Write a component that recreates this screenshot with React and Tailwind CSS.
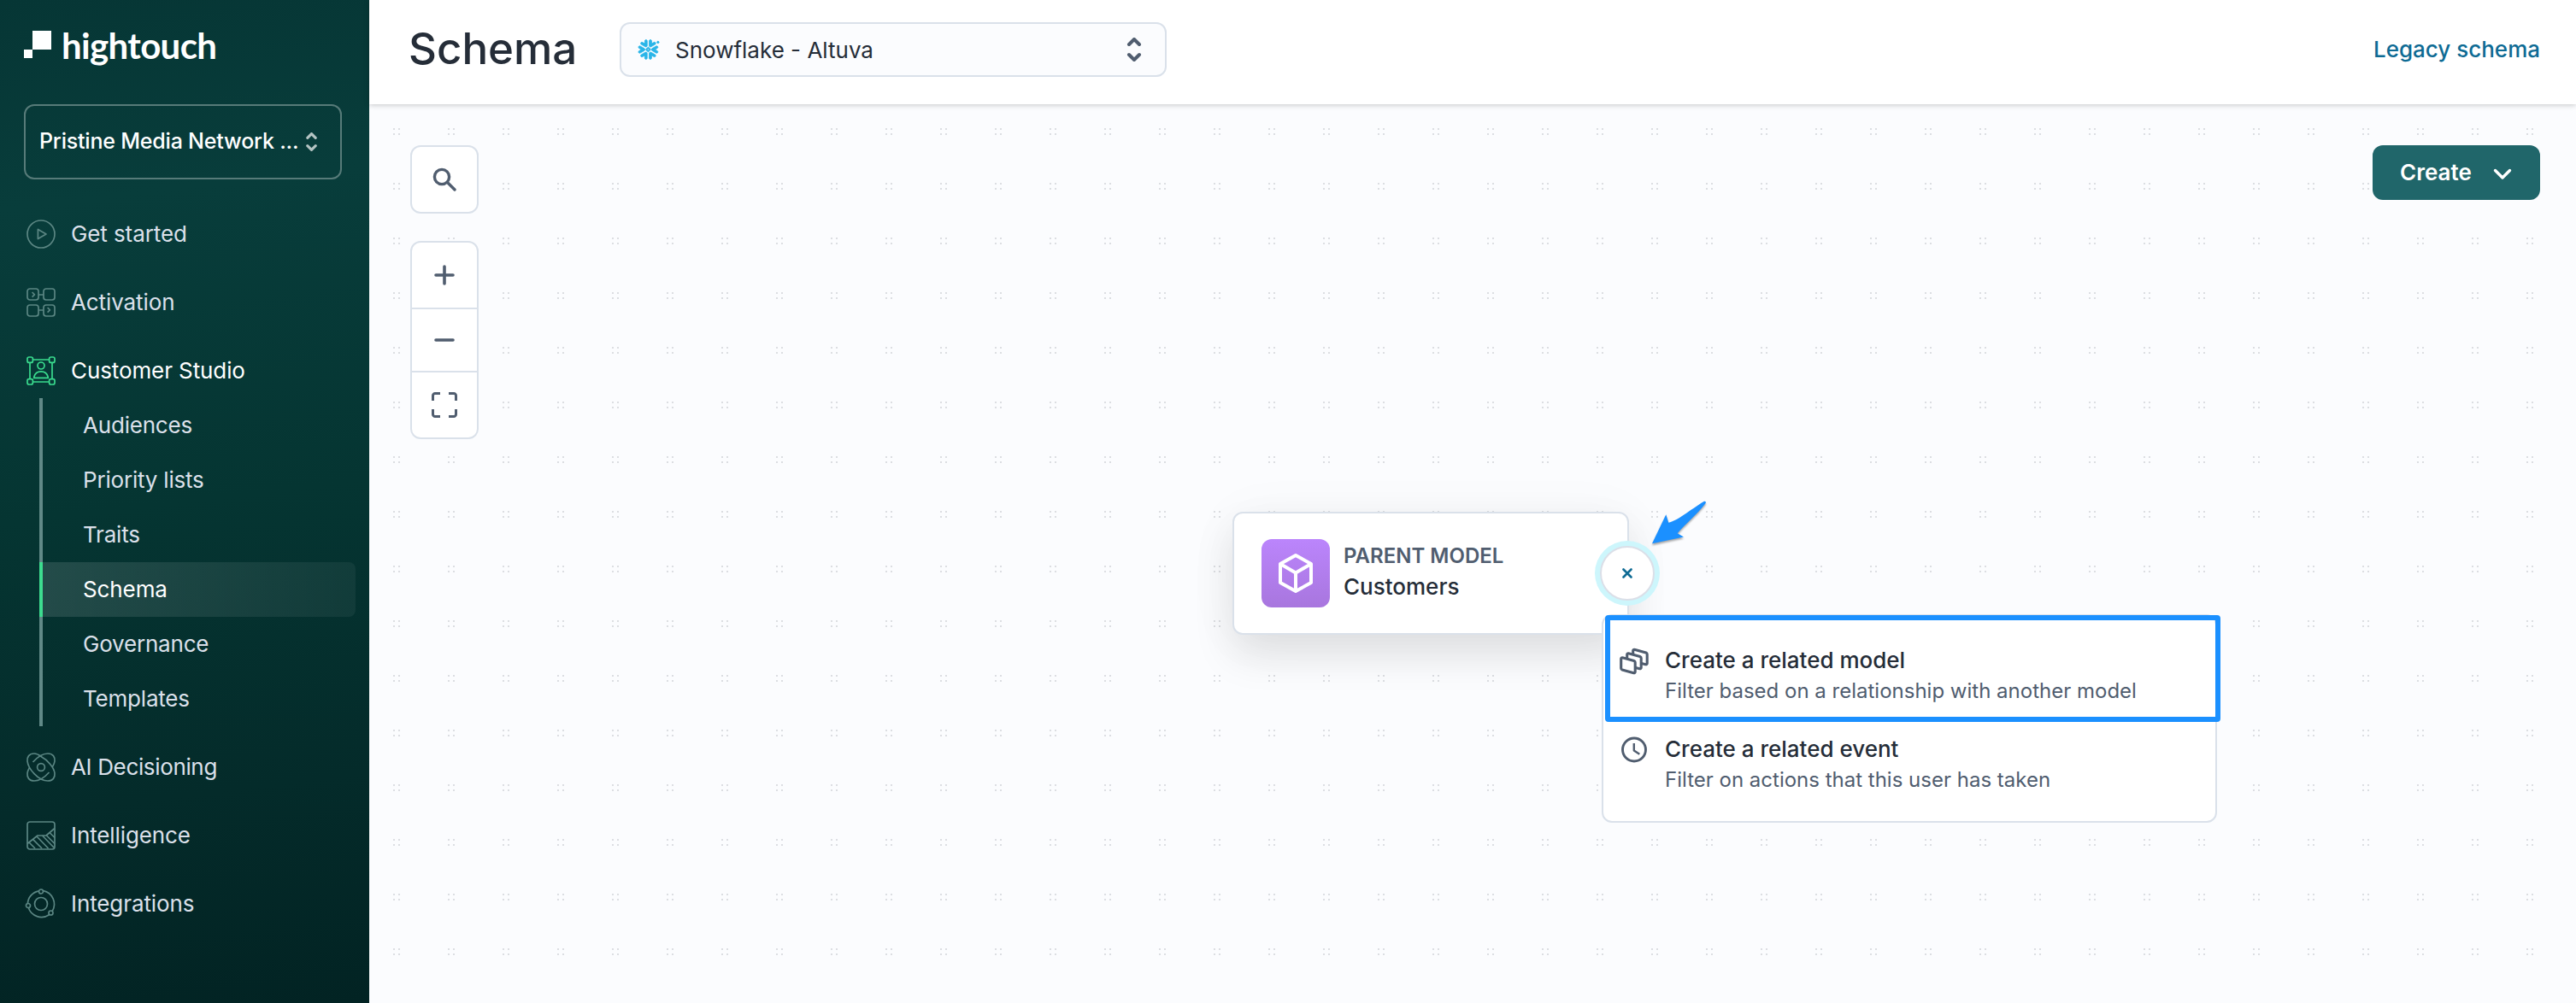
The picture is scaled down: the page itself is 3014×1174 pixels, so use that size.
import { SiSnowflake } from "react-icons/si";

const GetStartedIcon = () => (
  <>
    <circle cx="18" cy="18" r="16" />
    <path d="M14.4 12.4v11.2L24 18z" />
  </>
);

const ActivationIcon = () => (
  <>
    <rect x="2" y="2" width="13" height="13" rx="3" />
    <rect x="21" y="2" width="13" height="13" rx="3" />
    <rect x="2" y="21" width="13" height="13" rx="3" />
    <rect x="21" y="21" width="13" height="13" rx="3" />
    <path d="M15 9h6M15 27h6M7.6 6l2.8 2.8L7.6 11.6M25.6 24l2.8 2.8-2.8 2.8" />
  </>
);

const StudioIcon = () => (
  <>
    <rect x="2" y="2" width="6.4" height="6.4" rx="2" />
    <rect x="27.6" y="2" width="6.4" height="6.4" rx="2" />
    <rect x="2" y="27.6" width="6.4" height="6.4" rx="2" />
    <rect x="27.6" y="27.6" width="6.4" height="6.4" rx="2" />
    <path d="M8.4 5h19.2M8.4 31h19.2M5 8.4v19.2M31 8.4v19.2" />
    <circle cx="18" cy="12" r="4" />
    <path d="M9.8 26.4v-1.2c1-4 4-6.4 8.2-6.4s7.2 2.4 8.2 6.4v1.2z" />
  </>
);

const AtomIcon = () => (
  <>
    <circle cx="18" cy="18" r="4.4" />
    <path d="M8.500 12c4.500-5 11-10 17.500-10 6 0 8.500 4 8 9-.3 2.300-1.300 4.500-2.600 6.600" />
    <path d="M27.500 24C23 29 17 34 10 34c-6 0-8.500-4-8-9 .3-2.300 1.300-4.500 2.600-6.600" />
    <path d="M18 5.500C15.300 3.300 12.700 2 10 2 4 2 1.500 6 2 11c1 9 13 23 24 23 6 0 8.500-4 8-9-.8-6.800-8.500-15.500-16-19.500" />
  </>
);

const ChartIcon = () => (
  <>
    <rect x="2" y="2" width="32" height="32" rx="3" />
    <path d="M2 27.500L14 18h10L34 9.500M4.500 26.500L11 33M9 22.800L19 33M13 19l13.500 14M19.500 18L33 32M24.500 18L34 27.500M28 14.500l6 6" />
  </>
);

const OrbitIcon = () => (
  <>
    <circle cx="18" cy="18" r="7.5" />
    <circle cx="18" cy="3.5" r="2.5" />
    <circle cx="3" cy="20" r="2.5" />
    <circle cx="29.500" cy="28.500" r="2.5" />
    <path d="M20.700 2.600A16 16 0 0 1 31.200 26.500M27.500 30.700A16 16 0 0 1 3.300 22.600M2.400 17.500A16 16 0 0 1 15.500 2.800" />
  </>
);

const SUB_ITEMS = ["Audiences", "Priority lists", "Traits", "Schema", "Governance", "Templates"];

function NavItem({ label, icon: Icon, active, spacing = "tracking-[-0.1px]" }) {
  return (
    <a className="flex h-16 items-center gap-[17px] pl-[30px]">
      <svg
        viewBox="0 0 36 36"
        className={`size-9 shrink-0 overflow-visible ${active ? "stroke-[#3adb8e]" : "stroke-[#5b8683]"}`}
        fill="none"
        strokeWidth="1.7"
        strokeLinejoin="round"
      >
        <Icon />
      </svg>
      <span className={`whitespace-nowrap pb-px ${spacing} ${active ? "text-white" : "text-[#dbe0ea]"}`}>{label}</span>
    </a>
  );
}

function UpDown({ className, strokeWidth }) {
  return (
    <svg viewBox="0 0 20 28" className={className} fill="none" strokeWidth={strokeWidth} strokeLinecap="round" strokeLinejoin="round">
      <path d="M4 8l6-6 6 6M4 20l6 6 6-6" />
    </svg>
  );
}

function Sidebar() {
  return (
    <aside className="flex w-[432px] shrink-0 flex-col bg-[linear-gradient(173deg,#063635_0%,#083d3b_20%,#053532_50%,#042b2a_78%,#022323_100%)] text-[26px] leading-8">
      <div className="flex h-[122px] items-start pl-7 pt-9">
        <svg viewBox="0 0 32 32" className="size-8" fill="#fff">
          <path d="M10 0h22v22H10zM0 22h10v10H0z" />
        </svg>
        <span className="-mt-[8px] ml-[12px] font-['Lato'] text-[42px] leading-[50px] font-bold tracking-[-0.65px] text-white">hightouch</span>
      </div>
      <div className="mx-7 flex h-[88px] w-[372px] items-center rounded-xl border-2 border-[#577b79] pl-4">
        <span className="whitespace-nowrap pb-0.5 text-[25px] font-medium tracking-[-0.2px] text-white">Pristine Media Network ...</span>
        <UpDown className="ml-[7px] h-[22px] w-[17px] stroke-[#b4c4c3]" strokeWidth="4" />
      </div>
      <nav className="mt-8 flex flex-col gap-4">
        <NavItem label="Get started" icon={GetStartedIcon} />
        <NavItem label="Activation" icon={ActivationIcon} />
        <div>
          <NavItem label="Customer Studio" icon={StudioIcon} active />
          <ul className="mr-4 ml-[46px]">
            {SUB_ITEMS.map((label) =>
              label === "Schema" ? (
                <li key={label} className="flex h-16 items-center rounded-r-lg border-l-4 border-[#3ddc8f] bg-[linear-gradient(90deg,rgba(255,255,255,0.12),rgba(255,255,255,0.05))] pb-px pl-[47px] tracking-[-0.1px] text-white">
                  {label}
                </li>
              ) : (
                <li key={label} className="flex h-16 items-center border-l-4 border-[#618987] pb-px pl-[47px] tracking-[-0.2px] text-[#dbe0ea]">
                  {label}
                </li>
              )
            )}
          </ul>
        </div>
        <NavItem label="AI Decisioning" icon={AtomIcon} spacing="tracking-[-0.35px]" />
        <NavItem label="Intelligence" icon={ChartIcon} />
        <NavItem label="Integrations" icon={OrbitIcon} />
      </nav>
    </aside>
  );
}

function Header() {
  return (
    <header className="relative z-10 flex h-[122px] shrink-0 items-start bg-white pr-[42px] pl-[46px] pt-[26px] shadow-[0_1px_6px_rgba(0,0,0,0.22)]">
      <h1 className="-mt-[1px] w-[247px] text-[51px] leading-[64px] font-medium text-[#252d38]">Schema</h1>
      <div className="flex h-16 w-[640px] items-center rounded-xl border-2 border-[#dae1ea] bg-[#fbfcfe] pr-[26px] pl-5 text-[26px] text-[#252d38]">
        <SiSnowflake className="size-6 overflow-visible text-[#29b5e8]" strokeWidth="0.8" />
        <span className="ml-[19px] flex-1">Snowflake - Altuva</span>
        <UpDown className="h-7 w-5 stroke-[#505d6f]" strokeWidth="4" />
      </div>
      <a className="ml-auto text-[26px] leading-[63px] font-medium text-[#0e6b94]">Legacy schema</a>
    </header>
  );
}

function DotGrid() {
  return (
    <svg className="absolute inset-0 size-full">
      <defs>
        <pattern id="dots" x="28" y="28" width="64" height="64" patternUnits="userSpaceOnUse">
          <path fill="#dcdee2" d="M0 0h2v2H0zM6 0h2v2H6zM0 6h2v2H0zM6 6h2v2H6z" />
        </pattern>
      </defs>
      <rect width="100%" height="100%" fill="url(#dots)" />
    </svg>
  );
}

function Tools() {
  return (
    <div className="flex flex-col gap-8">
      <button className="flex size-20 items-center justify-center rounded-xl border-2 border-[#dae1ea] bg-white">
        <svg viewBox="0 0 28 28" className="size-7" fill="none" stroke="#505d6f" strokeWidth="3.4" strokeLinecap="round">
          <circle cx="11" cy="11" r="8.600" />
          <path d="M17.500 17.500l8.500 8.500" />
        </svg>
      </button>
      <div className="flex h-[232px] w-20 flex-col rounded-xl border-2 border-[#dae1ea] bg-white">
        <button className="flex h-[78px] items-center justify-center border-b-2 border-[#dae1ea]">
          <svg viewBox="0 0 24 24" className="size-6" stroke="#505d6f" strokeWidth="3.6" strokeLinecap="round">
            <path d="M12 2v20M2 12h20" />
          </svg>
        </button>
        <button className="flex h-[74px] items-center justify-center border-b-2 border-[#dae1ea]">
          <svg viewBox="0 0 24 24" className="size-6" stroke="#505d6f" strokeWidth="3.6" strokeLinecap="round">
            <path d="M2 12h20" />
          </svg>
        </button>
        <button className="flex flex-1 items-center justify-center">
          <svg viewBox="0 0 30 30" className="size-[30px]" fill="none" stroke="#505d6f" strokeWidth="3">
            <path d="M10 1.500H4A2.500 2.500 0 0 0 1.500 4v6M20 1.500h6A2.500 2.500 0 0 1 28.500 4v6M10 28.500H4A2.500 2.500 0 0 1 1.500 26v-6M20 28.500h6a2.500 2.500 0 0 0 2.500-2.500v-6" />
          </svg>
        </button>
      </div>
    </div>
  );
}

function ModelCard() {
  return (
    <div className="absolute top-[477px] left-[1010px] flex h-[144px] w-[464px] items-center rounded-xl border-2 border-[#dae1ea] bg-white pl-8 shadow-[0_24px_48px_rgba(0,0,0,0.1),0_4px_64px_rgba(0,0,0,0.04)]">
      <div className="flex size-20 items-center justify-center rounded-xl bg-[linear-gradient(180deg,#bb85fc,#a876de)]">
        <svg viewBox="0 0 44 48" className="h-12 w-11" fill="none" stroke="#fff" strokeWidth="4" strokeLinejoin="round">
          <path d="M22 3l18 10v22L22 45 4 35V13zM4 13l18 10.500L40 13M22 23.500V45" />
        </svg>
      </div>
      <div className="ml-4 pb-[5px]">
        <div className="text-2xl leading-9 font-semibold text-[#505d6f]">PARENT MODEL</div>
        <div className="text-[26px] leading-9 font-medium text-[#252d38]">Customers</div>
      </div>
      <button className="absolute top-[38px] -right-8 flex size-16 items-center justify-center rounded-full border-2 border-[#dbdfe8] bg-white shadow-[0_0_0_6px_#cdf6fc]">
        <svg viewBox="0 0 12 12" className="size-3" stroke="#0e6b94" strokeWidth="2.6" strokeLinecap="round">
          <path d="M1.500 1.500l9 9M10.500 1.500l-9 9" />
        </svg>
      </button>
    </div>
  );
}

function MenuItem({ title, text, children }) {
  return (
    <div className="flex">
      <svg viewBox="0 0 36 36" className="mt-0.5 size-9" fill="none" stroke="#505d6f" strokeWidth="3.1" strokeLinejoin="round" strokeLinecap="round">
        {children}
      </svg>
      <div className="ml-[18px] whitespace-nowrap">
        <div className="text-[26px] leading-9 font-medium text-[#252d38]">{title}</div>
        <div className="text-2xl leading-[35px] text-[#505d6f]">{text}</div>
      </div>
    </div>
  );
}

function CreateMenu() {
  return (
    <div className="absolute top-[597px] left-[1442px] flex h-[244px] w-[720px] flex-col gap-[33px] rounded-xl border-2 border-[#dae1ea] bg-white pt-[34px] pl-[18px]">
      <MenuItem title="Create a related model" text="Filter based on a relationship with another model">
        <path d="M2.700 14a1.300 1.300 0 0 1 1.700-1.200l13.500 3.800a1.800 1.800 0 0 1 1.300 1.700v11.200a1.300 1.300 0 0 1-1.700 1.200L4 26.900a1.800 1.800 0 0 1-1.300-1.700z" />
        <path d="M9.700 13V9a1.300 1.300 0 0 1 1.700-1.200l13.500 3.800a1.800 1.800 0 0 1 1.300 1.700V24.500a1.300 1.300 0 0 1-1.700 1.200l-4-1" />
        <path d="M16.700 8.500V4.500a1.300 1.300 0 0 1 1.700-1.200l13.500 3.800a1.800 1.800 0 0 1 1.300 1.700V19.500a1.300 1.300 0 0 1-1.700 1.200l-4-1" />
      </MenuItem>
      <MenuItem title="Create a related event" text="Filter on actions that this user has taken">
        <circle cx="18" cy="16.500" r="13.500" strokeWidth="2.9" />
        <path strokeWidth="2.4" d="M17.800 9V17.500l6.500 4.300" strokeLinecap="butt" />
      </MenuItem>
    </div>
  );
}

function Annotations() {
  return (
    <>
      <div className="absolute top-[598px] left-[1446px] h-[125px] w-[720px] rounded-[4px] border-[6px] border-[#1b90ff]" />
      <svg viewBox="0 0 70 56" className="absolute top-[461px] left-[1498px] h-14 w-[70px] overflow-visible drop-shadow-[0_2px_1px_rgba(0,0,0,0.35)]" fill="#1b90ff">
        <path d="M3 53.300L19.300 19.300L22.300 28.700C32 27 48 13.500 63.500 4C65 3.100 66.600 4.500 65.600 6C55 20 43 29 32.700 41.200L40 45.500Z" />
      </svg>
    </>
  );
}

export default function App() {
  return (
    <div className="flex h-[1174px] w-[3014px] overflow-hidden font-['Inter',sans-serif]">
      <Sidebar />
      <div className="flex min-w-0 flex-1 flex-col">
        <Header />
        <main className="relative flex-1 bg-[#fbfcfe]">
          <DotGrid />
          <div className="relative flex items-start justify-between pt-12 pr-[42px] pl-12">
            <Tools />
            <button className="flex h-16 w-[196px] items-center rounded-xl bg-[#20666a] pb-px pl-8 text-[26px] font-semibold text-white">
              Create
              <svg viewBox="0 0 24 16" className="ml-[24px] mt-1 h-4 w-6" fill="none" stroke="#fff" strokeWidth="3.4" strokeLinecap="round" strokeLinejoin="round">
                <path d="M3.500 3.500l8.500 8.500 8.500-8.500" />
              </svg>
            </button>
          </div>
          <ModelCard />
          <CreateMenu />
          <Annotations />
        </main>
      </div>
    </div>
  );
}
